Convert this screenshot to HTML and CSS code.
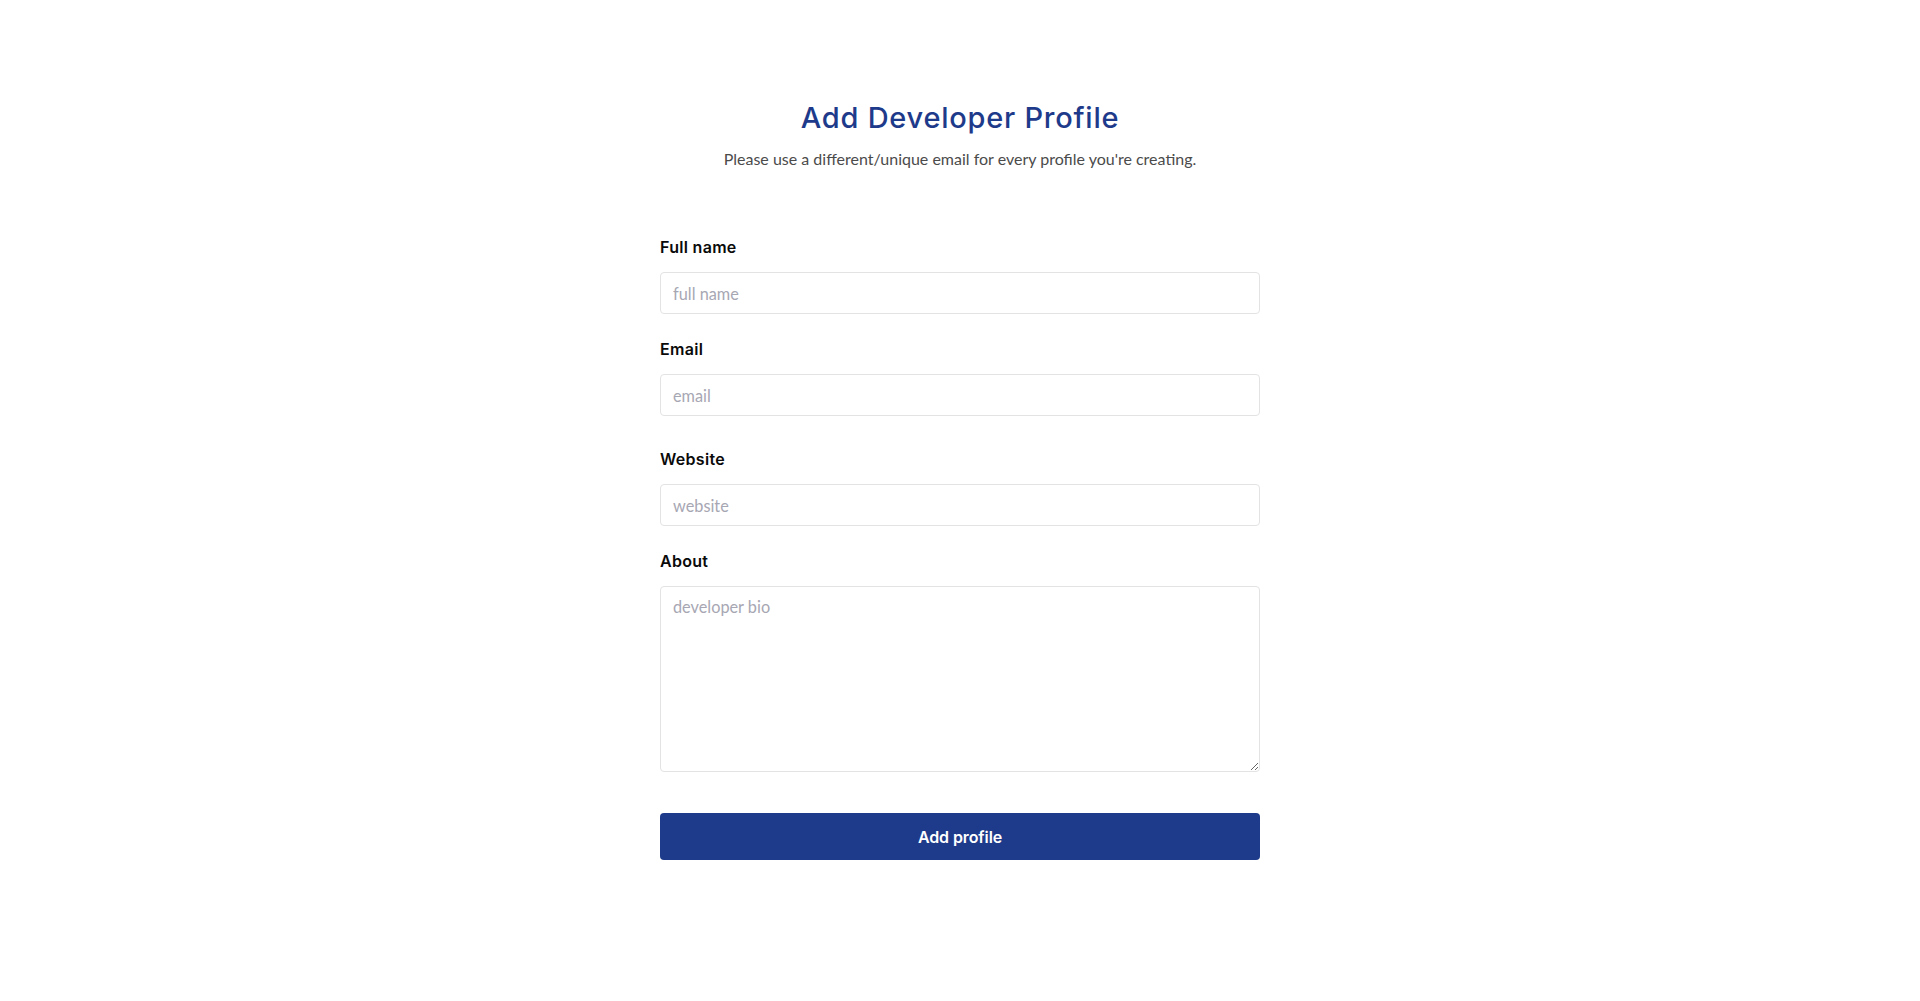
FILE: index.html
```html
<!DOCTYPE html>
<html lang="en">
<head>
<meta charset="utf-8">
<title>Add Developer Profile</title>
<link rel="stylesheet" href="styles.css">
</head>
<body>
<main class="page">
  <header class="intro">
    <h1 class="title">Add Developer Profile</h1>
    <p class="subtitle">Please use a different/unique email for every profile you're creating.</p>
  </header>
  <form class="form">
    <div class="field">
      <label class="label" for="fullname">Full name</label>
      <input class="input" id="fullname" type="text" placeholder="full name">
    </div>
    <div class="field field-email">
      <label class="label" for="email">Email</label>
      <input class="input" id="email" type="email" placeholder="email">
    </div>
    <div class="field">
      <label class="label" for="website">Website</label>
      <input class="input" id="website" type="text" placeholder="website">
    </div>
    <div class="field">
      <label class="label" for="about">About</label>
      <textarea class="input textarea" id="about" placeholder="developer bio"></textarea>
    </div>
    <button class="submit" type="button">Add profile</button>
  </form>
</main>
</body>
</html>
```

FILE: styles.css
```css
* { box-sizing: border-box; }

html, body {
  margin: 0;
  padding: 0;
  background: #ffffff;
}

body {
  font-family: "Lato", "Open Sans", sans-serif;
  color: #111;
}

.page {
  width: 600px;
  margin: 0 auto;
  padding-top: 97px;
}

.intro {
  text-align: center;
}

.title {
  margin: 0;
  font-family: "Inter", "Open Sans", sans-serif;
  font-weight: 500;
  font-size: 29px;
  line-height: 42px;
  letter-spacing: 0.75px;
  color: #1e3a8a;
}

.subtitle {
  margin: 8px 0 0;
  font-family: "Lato", sans-serif;
  font-size: 16px;
  line-height: 24px;
  color: #4b4b4b;
}

.form {
  display: flex;
  flex-direction: column;
  margin-top: 64px;
}

.field {
  display: flex;
  flex-direction: column;
  margin-bottom: 23px;
}

.field-email {
  margin-bottom: 31px;
}

.label {
  font-family: "Inter", sans-serif;
  font-weight: 600;
  font-size: 16px;
  line-height: 24px;
  color: #0a0a0a;
  margin-bottom: 13px;
  letter-spacing: 0.3px;
}

.input {
  width: 100%;
  height: 42px;
  border: 1px solid #e3e3e3;
  border-radius: 4px;
  padding: 0 12px;
  font-family: "Lato", sans-serif;
  font-size: 16.3px;
  color: #111;
  background: #fff;
  outline: none;
}

.input::placeholder {
  color: #a7a7b3;
}

.textarea {
  height: 186px;
  padding: 9px 12px;
  line-height: 22px;
  resize: vertical;
}

.submit {
  margin-top: 18px;
  width: 100%;
  height: 47px;
  border: none;
  border-radius: 4px;
  background: #1e3a8a;
  color: #ffffff;
  font-family: "Inter", sans-serif;
  font-weight: 600;
  font-size: 16px;
  letter-spacing: -0.1px;
  cursor: pointer;
}
```
